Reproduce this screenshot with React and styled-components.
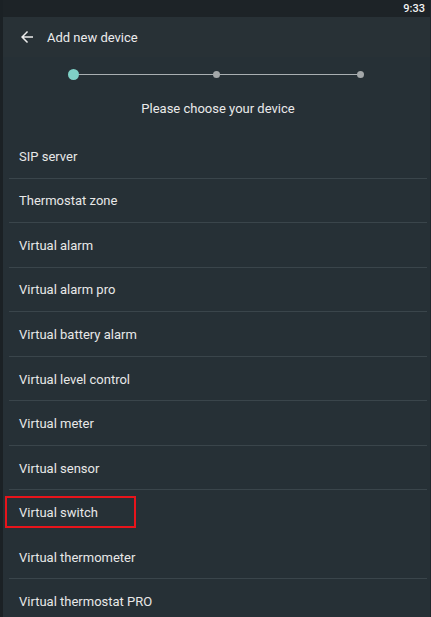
import React from 'react';
import styled, { createGlobalStyle } from 'styled-components';

const GlobalStyle = createGlobalStyle`
  html, body {
    margin: 0;
    padding: 0;
    background: #1b2125;
  }
  body {
    font-family: Roboto, "Noto Sans", "Liberation Sans", sans-serif;
    -webkit-font-smoothing: antialiased;
  }
`;

const Screen = styled.div`
  width: 431px;
  height: 617px;
  overflow: hidden;
  display: flex;
  flex-direction: column;
  background: #263036;
  border-left: 3px solid #1b2125;
  border-right: 1px solid #1f272b;
  box-sizing: border-box;
  & > * {
    flex-shrink: 0;
  }
`;

const StatusBar = styled.div`
  height: 17px;
  background: #1d2327;
  display: flex;
  align-items: center;
  justify-content: flex-end;
  padding-right: 5px;
  color: #f2f2f2;
  font-size: 11px;
  font-weight: 500;
`;

const Toolbar = styled.div`
  height: 40px;
  background: #283136;
  display: flex;
  align-items: center;
  gap: 11px;
  padding-left: 15px;
  color: #ececec;
  font-size: 13px;
`;

const BackButton = styled.span`
  display: flex;
  width: 18px;
  height: 18px;
`;

const Stepper = styled.div`
  position: relative;
  margin: 10px 0 0 64.5px;
  width: 298px;
  height: 14px;
  display: flex;
  align-items: center;
  justify-content: space-between;
`;

const StepLine = styled.div`
  position: absolute;
  left: 4px;
  right: 4px;
  top: 7px;
  height: 1px;
  background: #a9afb2;
`;

const Dot = styled.div`
  position: relative;
  width: ${p => (p.$active ? 11 : 7)}px;
  height: ${p => (p.$active ? 11 : 7)}px;
  border-radius: 50%;
  background: ${p => (p.$active ? '#7fd1c7' : '#a3a7a9')};
  margin: ${p => (p.$active ? '0' : '0 2px')};
`;

const Heading = styled.div`
  margin-top: 19px;
  text-align: center;
  color: #eaeaea;
  font-size: 13px;
  height: 17px;
  line-height: 17px;
  padding-left: 3px;
`;

const List = styled.div`
  margin-top: 17px;
  display: flex;
  flex-direction: column;
`;

const Row = styled.div`
  position: relative;
  height: 44.56px;
  box-sizing: border-box;
  display: flex;
  align-items: center;
  padding: 1px 0 0 10px;
  color: #e8e8e8;
  font-size: 13px;
  border-bottom: 1px solid ${p => (p.$plain ? 'transparent' : '#3a454b')};
  margin: 0 3px 0 6px;
`;

const Highlight = styled.div`
  position: absolute;
  left: -4px;
  top: 6px;
  width: 131px;
  height: 32px;
  box-sizing: border-box;
  border: 2px solid #e8141b;
`;

const items = [
  'SIP server',
  'Thermostat zone',
  'Virtual alarm',
  'Virtual alarm pro',
  'Virtual battery alarm',
  'Virtual level control',
  'Virtual meter',
  'Virtual sensor',
  'Virtual switch',
  'Virtual thermometer',
  'Virtual thermostat PRO',
];

const App = () => (
  <>
    <GlobalStyle />
    <Screen>
      <StatusBar>9:33</StatusBar>
      <Toolbar>
        <BackButton>
          <svg width="18" height="18" viewBox="0 0 24 24" fill="#ececec">
            <path d="M20 11H7.83l5.59-5.59L12 4l-8 8 8 8 1.41-1.41L7.83 13H20v-2z" />
          </svg>
        </BackButton>
        Add new device
      </Toolbar>
      <Stepper>
        <StepLine />
        <Dot $active />
        <Dot />
        <Dot />
      </Stepper>
      <Heading>Please choose your device</Heading>
      <List>
        {items.map(item => (
          <Row key={item} $plain={item === 'Virtual switch'}>
            {item === 'Virtual switch' && <Highlight />}
            <span>{item}</span>
          </Row>
        ))}
      </List>
    </Screen>
  </>
);

export default App;
